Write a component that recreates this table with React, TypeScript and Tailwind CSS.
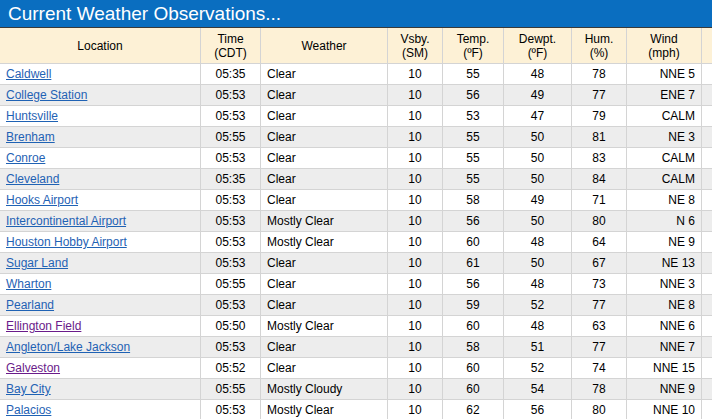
import React from "react";

type Row = {
  loc: string;
  visited?: boolean;
  time: string;
  wx: string;
  vis: string;
  t: string;
  d: string;
  h: string;
  w: string;
};

const rows: Row[] = [
  { loc: "Caldwell", time: "05:35", wx: "Clear", vis: "10", t: "55", d: "48", h: "78", w: "NNE 5" },
  { loc: "College Station", time: "05:53", wx: "Clear", vis: "10", t: "56", d: "49", h: "77", w: "ENE 7" },
  { loc: "Huntsville", time: "05:53", wx: "Clear", vis: "10", t: "53", d: "47", h: "79", w: "CALM" },
  { loc: "Brenham", time: "05:55", wx: "Clear", vis: "10", t: "55", d: "50", h: "81", w: "NE 3" },
  { loc: "Conroe", time: "05:53", wx: "Clear", vis: "10", t: "55", d: "50", h: "83", w: "CALM" },
  { loc: "Cleveland", time: "05:35", wx: "Clear", vis: "10", t: "55", d: "50", h: "84", w: "CALM" },
  { loc: "Hooks Airport", time: "05:53", wx: "Clear", vis: "10", t: "58", d: "49", h: "71", w: "NE 8" },
  { loc: "Intercontinental Airport", time: "05:53", wx: "Mostly Clear", vis: "10", t: "56", d: "50", h: "80", w: "N 6" },
  { loc: "Houston Hobby Airport", time: "05:53", wx: "Mostly Clear", vis: "10", t: "60", d: "48", h: "64", w: "NE 9" },
  { loc: "Sugar Land", time: "05:53", wx: "Clear", vis: "10", t: "61", d: "50", h: "67", w: "NE 13" },
  { loc: "Wharton", time: "05:55", wx: "Clear", vis: "10", t: "56", d: "48", h: "73", w: "NNE 3" },
  { loc: "Pearland", time: "05:53", wx: "Clear", vis: "10", t: "59", d: "52", h: "77", w: "NE 8" },
  { loc: "Ellington Field", visited: true, time: "05:50", wx: "Mostly Clear", vis: "10", t: "60", d: "48", h: "63", w: "NNE 6" },
  { loc: "Angleton/Lake Jackson", time: "05:53", wx: "Clear", vis: "10", t: "58", d: "51", h: "77", w: "NNE 7" },
  { loc: "Galveston", visited: true, time: "05:52", wx: "Clear", vis: "10", t: "60", d: "52", h: "74", w: "NNE 15" },
  { loc: "Bay City", time: "05:55", wx: "Mostly Cloudy", vis: "10", t: "60", d: "54", h: "78", w: "NNE 9" },
  { loc: "Palacios", time: "05:53", wx: "Mostly Clear", vis: "10", t: "62", d: "56", h: "80", w: "NNE 10" },
];

const cell = "border-r border-[#d4d4d4] shrink-0 flex items-center";

export default function App() {
  return (
    <div
      className="w-[712px] h-[419px] overflow-hidden bg-white text-black"
      style={{ fontFamily: '"Liberation Sans", Arial, sans-serif' }}
    >
      <div className="h-[27px] bg-[#0a6ec0] flex items-center pl-2">
        <h1 className="text-[19px] leading-none text-white font-normal">
          Current Weather Observations...
        </h1>
      </div>
      <div className="w-[760px] border-t border-[#3a3a3a]">
        <div className="flex h-[36px] bg-[#fdf1d6] border-b border-[#d4d4d4] text-[12px] leading-[14px] text-center">
          <div className={`${cell} w-[201px] justify-center`}>Location</div>
          <div className={`${cell} w-[60px] justify-center`}>Time<br />(CDT)</div>
          <div className={`${cell} w-[127px] justify-center`}>Weather</div>
          <div className={`${cell} w-[55px] justify-center`}>Vsby.<br />(SM)</div>
          <div className={`${cell} w-[61px] justify-center`}>Temp.<br />(ºF)</div>
          <div className={`${cell} w-[68px] justify-center`}>Dewpt.<br />(ºF)</div>
          <div className={`${cell} w-[55px] justify-center`}>Hum.<br />(%)</div>
          <div className={`${cell} w-[75px] justify-center`}>Wind<br />(mph)</div>
          <div className={`${cell} w-[58px]`}></div>
        </div>
        {rows.map((r, i) => (
          <div
            key={r.loc}
            className={`flex h-[21px] border-b border-[#d4d4d4] text-[12px] leading-[14px] ${
              i % 2 === 1 ? "bg-[#ededed]" : "bg-white"
            }`}
          >
            <div className={`${cell} w-[201px] pl-[6px]`}>
              <a
                href="#"
                className={`underline ${r.visited ? "text-[#6a1b8a]" : "text-[#1f62b4]"}`}
              >
                {r.loc}
              </a>
            </div>
            <div className={`${cell} w-[60px] justify-center`}>{r.time}</div>
            <div className={`${cell} w-[127px] pl-[6px]`}>{r.wx}</div>
            <div className={`${cell} w-[55px] justify-center`}>{r.vis}</div>
            <div className={`${cell} w-[61px] justify-center`}>{r.t}</div>
            <div className={`${cell} w-[68px] justify-center`}>{r.d}</div>
            <div className={`${cell} w-[55px] justify-center`}>{r.h}</div>
            <div className={`${cell} w-[75px] justify-end pr-[6px]`}>{r.w}</div>
            <div className={`${cell} w-[58px]`}></div>
          </div>
        ))}
      </div>
    </div>
  );
}
